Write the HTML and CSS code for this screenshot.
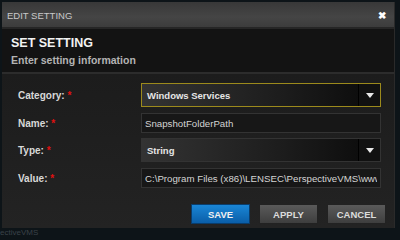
FILE: index.html
```html
<!DOCTYPE html>
<html lang="en">
<head>
    <meta charset="UTF-8">
    <title>Edit Setting</title>
    <link rel="stylesheet" href="styles.css">
</head>
<body>
    <div class="dialog">
        <div class="titlebar">
            <span class="title">EDIT SETTING</span>
            <span class="close">&#10006;</span>
        </div>
        <div class="header">
            <div class="heading">SET SETTING</div>
            <div class="subheading">Enter setting information</div>
        </div>
        <div class="content">
            <div class="row">
                <label class="label">Category: <span class="req">*</span></label>
                <div class="select active">
                    <span class="select-text">Windows Services</span>
                    <span class="arrow"></span>
                </div>
            </div>
            <div class="row row-small">
                <label class="label">Name: <span class="req">*</span></label>
                <input type="text" class="field" value="SnapshotFolderPath">
            </div>
            <div class="row">
                <label class="label">Type: <span class="req">*</span></label>
                <div class="select">
                    <span class="select-text">String</span>
                    <span class="arrow"></span>
                </div>
            </div>
            <div class="row row-small">
                <label class="label">Value: <span class="req">*</span></label>
                <input type="text" class="field" value="C:\Program Files (x86)\LENSEC\PerspectiveVMS\wwwroot">
            </div>
            <div class="buttons">
                <button class="btn btn-save">SAVE</button>
                <button class="btn">APPLY</button>
                <button class="btn">CANCEL</button>
            </div>
        </div>
    </div>
    <div class="behind">ectiveVMS</div>
</body>
</html>
```

FILE: styles.css
```css
body {
    margin: 0;
    height: 240px;
    background-color: #0d1418;
    font-family: "Liberation Sans", Arial, sans-serif;
    overflow: hidden;
}

.dialog {
    width: 392px;
    margin: 2px 0 0 2px;
    background-color: #1e1e1e;
    border-right: 1px solid #2a2a2a;
}

.titlebar {
    height: 25px;
    display: flex;
    align-items: center;
    justify-content: space-between;
    padding: 1px 8px 0 5px;
    box-sizing: border-box;
    background: linear-gradient(to bottom, #383838, #454545 60%, #3c3c3c);
    border-bottom: 2px solid #262626;
    height: 27px;
}

.title {
    color: #c8c8c8;
    font-size: 9.5px;
}

.close {
    color: #fff;
    font-size: 10px;
    font-weight: bold;
}

.header {
    height: 37px;
    padding: 6px 9px 0;
    background-color: #131313;
    border-bottom: 2px solid #2c2c2c;
}

.heading {
    color: #f2f2f2;
    font-size: 12.5px;
    font-weight: bold;
    line-height: 16px;
}

.subheading {
    margin-top: 3px;
    color: #b4b4b4;
    font-size: 10.5px;
    font-weight: bold;
}

.content {
    padding: 9px 13px 4px 16px;
    background: linear-gradient(to bottom, #1c1c1c, #232323);
}

.row {
    display: flex;
    align-items: center;
    height: 24px;
    margin-bottom: 6px;
}

.row-small {
    height: 20px;
    margin-bottom: 5px;
}

.label {
    width: 123px;
    color: #d8d8d8;
    font-size: 10px;
    font-weight: bold;
}

.req {
    color: #e01010;
}

.select {
    flex: 1;
    height: 22px;
    display: flex;
    align-items: stretch;
    border: 1px solid #333;
    background: linear-gradient(to right, #333 0%, #1c1c1c 60%, #0a0a0a 100%);
}

.select.active {
    border-color: #9c8a1c;
}

.select-text {
    flex: 1;
    padding-left: 5px;
    display: flex;
    align-items: center;
    color: #e6e6e6;
    font-size: 9.5px;
    font-weight: bold;
}

.arrow {
    width: 21px;
    border-left: 1px solid #000;
    background-color: #111;
    display: flex;
    align-items: center;
    justify-content: center;
}

.arrow::after {
    content: "";
    border-left: 4px solid transparent;
    border-right: 4px solid transparent;
    border-top: 5px solid #e8e8e8;
}

.field {
    flex: 1;
    min-width: 0;
    height: 20px;
    box-sizing: border-box;
    padding: 0 3px;
    border: 1px solid #333;
    background-color: #171717;
    color: #d4d4d4;
    font-family: "Liberation Sans", Arial, sans-serif;
    font-size: 9.7px;
}

.buttons {
    display: flex;
    justify-content: flex-end;
    gap: 9px;
    margin-top: 16px;
    margin-right: -5px;
}

.btn {
    width: 59px;
    height: 20px;
    border: 1px solid #222;
    background: linear-gradient(to bottom, #5a5a5a, #3e3e3e);
    color: #dcdcdc;
    font-family: "Liberation Sans", Arial, sans-serif;
    font-size: 9.5px;
    font-weight: bold;
    padding: 0;
}

.btn-save {
    background: linear-gradient(to bottom, #1a86d6, #0a5ea8);
    border-color: #0a3d6c;
    color: #f0f0f0;
}

.behind {
    margin-top: 2px;
    color: #3a4248;
    font-size: 8px;
    line-height: 5px;
    height: 5px;
    overflow: hidden;
}
```
